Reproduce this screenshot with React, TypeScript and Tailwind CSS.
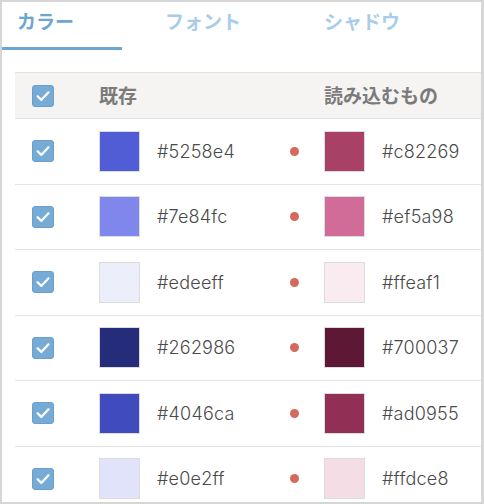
const rows = [
  { a: '#5258e4', aShow: '#505dd5', b: '#c82269', bShow: '#a94066' },
  { a: '#7e84fc', aShow: '#7f87ec', b: '#ef5a98', bShow: '#d16b97' },
  { a: '#edeeff', aShow: '#eceef9', b: '#ffeaf1', bShow: '#f9ebf0' },
  { a: '#262986', aShow: '#252d7a', b: '#700037', bShow: '#5c1834' },
  { a: '#4046ca', aShow: '#404cbd', b: '#ad0955', bShow: '#922f55' },
  { a: '#e0e2ff', aShow: '#e0e3fa', b: '#ffdce8', bShow: '#f4dde4' },
];

const jp = { fontFamily: '"Noto Sans CJK JP", "Noto Sans", sans-serif' };
const latin = { fontFamily: 'Inter, "Liberation Sans", sans-serif' };

function Check() {
  return (
    <div className="w-[22px] h-[22px] rounded-[3px] bg-[#76abd6] border border-[#6a9fcb] flex items-center justify-center shrink-0">
      <svg width="16" height="16" viewBox="0 0 16 16" fill="none">
        <path d="M2.6 8.2 L6.3 11.9 L13.5 4.3" stroke="white" strokeWidth="2.2" strokeLinecap="round" strokeLinejoin="round" />
      </svg>
    </div>
  );
}

function Swatch({ color }: { color: string }) {
  return <div className="w-[41px] h-[41px] border border-[#dcdcdc] shrink-0" style={{ backgroundColor: color }} />;
}

export default function App() {
  return (
    <div className="w-[484px] h-[504px] overflow-hidden border-t-2 border-l-2 border-b-2 border-r-[3px] border-[#d6d6d6] bg-white">
      <div className="flex h-[48px]" style={jp}>
        <div className="w-[120px] h-full border-b-[3px] border-[#6fa6d1] pl-[15px] pt-[8px]">
          <span className="text-[19px] leading-[19px] font-bold text-[#6fa6d1]">カラー</span>
        </div>
        <div className="ml-[43px] pt-[8px]">
          <span className="text-[19px] leading-[19px] font-bold text-[#a9cde8]">フォント</span>
        </div>
        <div className="ml-[83px] pt-[8px]">
          <span className="text-[19px] leading-[19px] font-bold text-[#a9cde8]">シャドウ</span>
        </div>
      </div>

      <div className="ml-[13px] mt-[22px]">
        <div className="h-[47px] flex items-center bg-[#f5f4f2] border-y border-[#e1e1e1]" style={jp}>
          <div className="w-[84px] pl-[17px]">
            <Check />
          </div>
          <div className="w-[225px] text-[19px] font-bold text-[#7b7b7b]">既存</div>
          <div className="text-[19px] font-bold text-[#7b7b7b]">読み込むもの</div>
        </div>

        {rows.map((r) => (
          <div key={r.a} className="h-[65.5px] flex items-center border-b border-[#e4e4e4]">
            <div className="w-[84px] pl-[17px]">
              <Check />
            </div>
            <div className="w-[191px] flex items-center">
              <Swatch color={r.aShow} />
              <span className="ml-[17px] text-[18px] font-light tracking-[0.2px] text-[#4a4a4a]" style={latin}>
                {r.a}
              </span>
            </div>
            <div className="w-[34px] flex items-center">
              <div className="w-[9px] h-[9px] rounded-full bg-[#d4695e]" />
            </div>
            <div className="flex items-center">
              <Swatch color={r.bShow} />
              <span className="ml-[17px] text-[18px] font-light tracking-[0.2px] text-[#4a4a4a]" style={latin}>
                {r.b}
              </span>
            </div>
          </div>
        ))}
      </div>
    </div>
  );
}
